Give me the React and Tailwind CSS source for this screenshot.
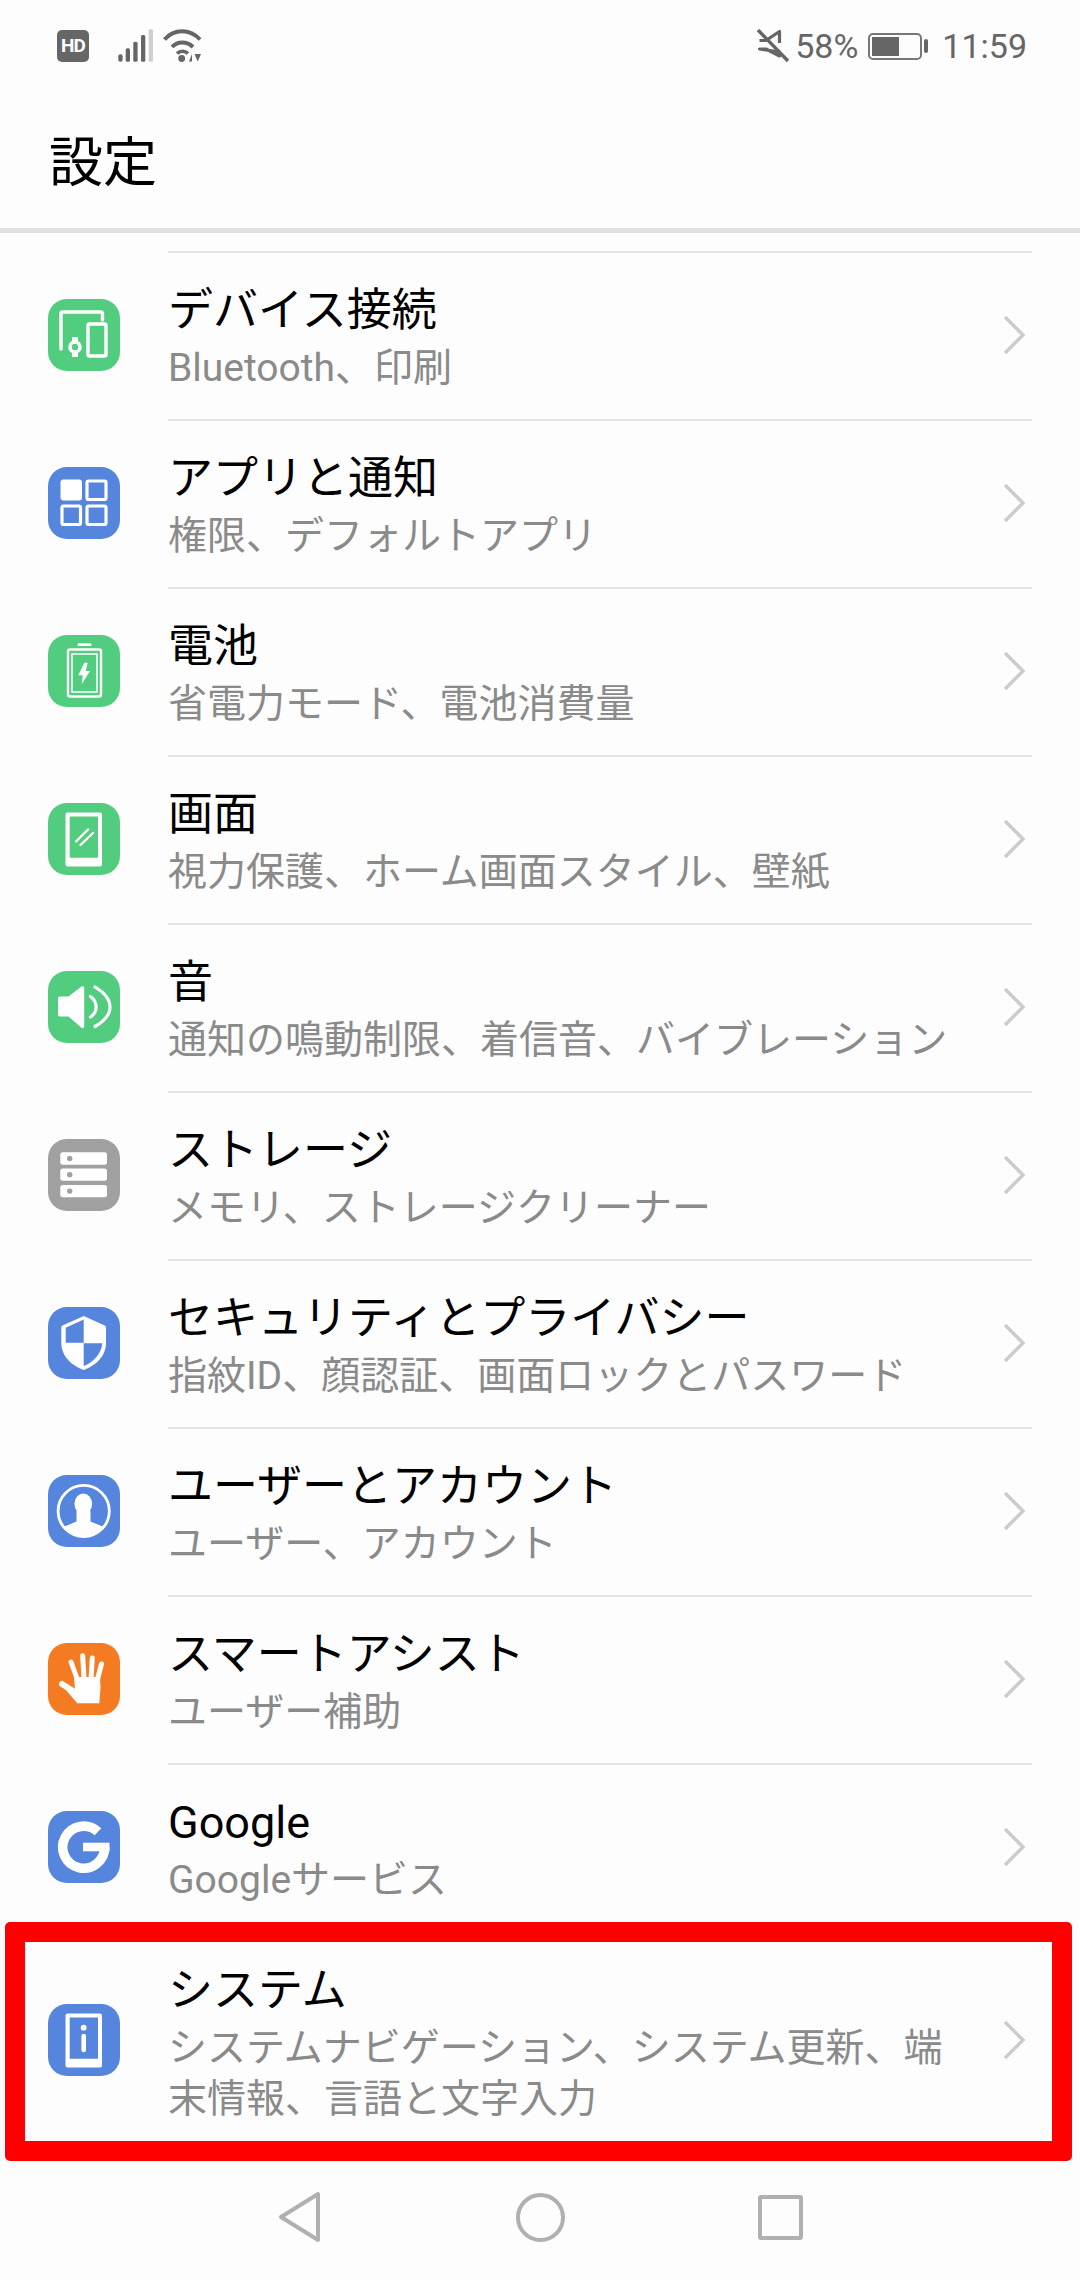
const GREEN = "#52cc7f";
const BLUE = "#5585dc";
const GRAY = "#a0a0a0";
const ORANGE = "#f47b22";

function IconBox({ color, children }) {
  return (
    <svg width="72" height="72" viewBox="0 0 72 72" className="block">
      <rect x="0" y="0" width="72" height="72" rx="19" fill={color} />
      {children}
    </svg>
  );
}

const DeviceIcon = () => (
  <IconBox color={GREEN}>
    <path d="M13 50V14.5a1.5 1.5 0 0 1 1.5-1.5H53a1.5 1.5 0 0 1 1.5 1.5V21" fill="none" stroke="#fff" strokeWidth="3.4" strokeLinecap="round" />
    <rect x="40" y="25" width="18" height="32" rx="1.5" fill="none" stroke="#fff" strokeWidth="3.4" />
    <circle cx="27" cy="48" r="5" fill="none" stroke="#fff" strokeWidth="3.6" />
    <rect x="24" y="38" width="6" height="4" fill="#fff" />
    <rect x="24" y="54" width="6" height="4" fill="#fff" />
  </IconBox>
);

const AppsIcon = () => (
  <IconBox color={BLUE}>
    <rect x="12.5" y="12.5" width="21.5" height="21" rx="3" fill="#fff" />
    <rect x="39" y="14" width="19" height="18.5" rx="1.5" fill="none" stroke="#fff" strokeWidth="3.2" />
    <rect x="14" y="39" width="18.5" height="18.5" rx="1.5" fill="none" stroke="#fff" strokeWidth="3.2" />
    <rect x="39" y="39" width="19" height="18.5" rx="1.5" fill="none" stroke="#fff" strokeWidth="3.2" />
  </IconBox>
);

const BatteryIcon = () => (
  <IconBox color={GREEN}>
    <rect x="29.5" y="8.3" width="14" height="2.8" rx="1.2" fill="#fff" />
    <rect x="20" y="14.5" width="33" height="47" rx="2" fill="none" stroke="#fff" strokeWidth="2.4" />
    <rect x="24" y="19" width="25" height="38" fill="none" stroke="#fff" strokeWidth="1.5" />
    <path d="M36.3 27.7L30.3 40.3H34.7L33.7 49.3L42 36H37.7L39.7 27.7Z" fill="#fff" />
  </IconBox>
);

const ScreenIcon = () => (
  <IconBox color={GREEN}>
    <path fillRule="evenodd" clipRule="evenodd" d="M19.5 9.5H52a2 2 0 0 1 2 2V61.5a2 2 0 0 1-2 2H19.5a2 2 0 0 1-2-2V11.5a2 2 0 0 1 2-2ZM21.7 13.5V54.7H50V13.5Z" fill="#fff" />
    <path d="M28 38.5L40 26.5M32.5 42L45 30" stroke="#fff" strokeWidth="2.4" strokeLinecap="round" />
  </IconBox>
);

const SoundIcon = () => (
  <IconBox color={GREEN}>
    <path d="M10 27.5a2 2 0 0 1 2-2H20.5L33.5 15.5a1.6 1.6 0 0 1 2.7 1.2V55.5a1.6 1.6 0 0 1-2.7 1.2L20.5 45.5H12a2 2 0 0 1-2-2Z" fill="#fff" />
    <path d="M42.5 25.5C50 31 50 41 42.5 46" fill="none" stroke="#fff" strokeWidth="3.2" strokeLinecap="round" />
    <path d="M47 16C67 28 67 44 47 55.5" fill="none" stroke="#fff" strokeWidth="3.2" strokeLinecap="round" />
  </IconBox>
);

const StorageIcon = () => (
  <IconBox color={GRAY}>
    <rect x="12.3" y="13.3" width="46.7" height="12.4" rx="2.5" fill="#fff" />
    <rect x="12.3" y="29.6" width="46.7" height="12.2" rx="2.5" fill="#fff" />
    <rect x="12.3" y="46" width="46.7" height="12.2" rx="2.5" fill="#fff" />
    <circle cx="21.7" cy="19.5" r="2.7" fill={GRAY} />
    <circle cx="21.7" cy="35.7" r="2.7" fill={GRAY} />
    <circle cx="21.7" cy="52.1" r="2.7" fill={GRAY} />
  </IconBox>
);

const ShieldIcon = () => (
  <IconBox color={BLUE}>
    <path d="M35.7 9L14.5 18.5a2 2 0 0 0-1.2 1.8V36C13.3 50 25 59 35.7 63C46.5 59 58 50 58 36V20.3a2 2 0 0 0-1.2-1.8Z" fill="#fff" />
    <path d="M17.7 20.7L35.7 12.5V35.7H17.7Z" fill={BLUE} />
    <path d="M35.7 36.3H54.3C53.5 47 45 55.5 35.7 59Z" fill={BLUE} />
  </IconBox>
);

const UserIcon = () => (
  <IconBox color={BLUE}>
    <circle cx="35.7" cy="36" r="25.6" fill="none" stroke="#fff" strokeWidth="2.8" />
    <ellipse cx="35.3" cy="29" rx="8.8" ry="10.5" fill="#fff" />
    <path d="M15.5 52L28.5 46.5V36H42.5V46.5L56 52C50 58.5 43 61 35.7 61C28 61 21 58 15.5 52Z" fill="#fff" />
  </IconBox>
);

const HandIcon = () => (
  <IconBox color={ORANGE}>
    <path d="M26 34H52L52.5 45L51.3 60.3H29.3L14 42.5L27 47Z" fill="#fff" />
    <path d="M14 41L28 50" stroke="#fff" strokeWidth="6" strokeLinecap="round" />
    <path d="M23 19L30 38M34.7 12.8L36 36M44.3 15L43 36M53.5 21L49 38" stroke="#fff" strokeWidth="5" strokeLinecap="round" />
  </IconBox>
);

const GoogleIcon = () => (
  <IconBox color={BLUE}>
    <path d="M50 20.8A21 21 0 1 0 56.7 36" fill="none" stroke="#fff" strokeWidth="9.6" />
    <rect x="35" y="31.7" width="26.5" height="8.6" fill="#fff" />
  </IconBox>
);

const InfoIcon = () => (
  <IconBox color={BLUE}>
    <path fillRule="evenodd" clipRule="evenodd" d="M19.5 9.5H52a2 2 0 0 1 2 2V61.5a2 2 0 0 1-2 2H19.5a2 2 0 0 1-2-2V11.5a2 2 0 0 1 2-2ZM21.7 13.5V54.7H50V13.5Z" fill="#fff" />
    <circle cx="35.7" cy="23.7" r="2.9" fill="#fff" />
    <path d="M35.7 32V46" stroke="#fff" strokeWidth="4.6" strokeLinecap="round" />
  </IconBox>
);

const rows = [
  { title: "デバイス接続", sub: "Bluetooth、印刷", icon: <DeviceIcon /> },
  { title: "アプリと通知", sub: "権限、デフォルトアプリ", icon: <AppsIcon /> },
  { title: "電池", sub: "省電力モード、電池消費量", icon: <BatteryIcon /> },
  { title: "画面", sub: "視力保護、ホーム画面スタイル、壁紙", icon: <ScreenIcon /> },
  { title: "音", sub: "通知の鳴動制限、着信音、バイブレーション", icon: <SoundIcon /> },
  { title: "ストレージ", sub: "メモリ、ストレージクリーナー", icon: <StorageIcon /> },
  { title: "セキュリティとプライバシー", sub: "指紋ID、顔認証、画面ロックとパスワード", icon: <ShieldIcon /> },
  { title: "ユーザーとアカウント", sub: "ユーザー、アカウント", icon: <UserIcon /> },
  { title: "スマートアシスト", sub: "ユーザー補助", icon: <HandIcon /> },
  { title: "Google", sub: "Googleサービス", icon: <GoogleIcon /> },
  { title: "システム", sub: "システムナビゲーション、システム更新、端末情報、言語と文字入力", icon: <InfoIcon /> },
];

function SettingRow({ title, sub, icon }) {
  return (
    <div className="flex">
      <div className="w-[168px] pl-12 pb-[5px] shrink-0 flex items-center">{icon}</div>
      <div className="flex-1 mr-12 flex items-center justify-between border-b-2 border-[#e4e4e4]">
        <div className="w-[790px] pt-[28px] pb-[25px]">
          <div className="text-[45px] leading-[60px] text-black">{title}</div>
          <div className="mt-[2px] text-[39px] leading-[51px] text-[#8a8a8a]">{sub}</div>
        </div>
        <svg width="24" height="40" viewBox="0 0 24 40" className="mr-[6px] mb-[3px]">
          <path d="M3 2L21 20L3 38" fill="none" stroke="#cccccc" strokeWidth="3.4" />
        </svg>
      </div>
    </div>
  );
}

function StatusBar() {
  return (
    <div className="h-[90px] pt-[2px] pl-[57px] pr-[53px] flex items-center justify-between text-[#666666]">
      <div className="flex items-center">
        <div className="w-[32px] h-[32px] rounded-[5px] bg-[#666666] text-white text-[19px] font-bold leading-[32px] text-center tracking-[-1px]">HD</div>
        <svg width="36" height="34" viewBox="0 0 36 34" className="ml-[29px]">
          <rect x="0.3" y="25.3" width="4.3" height="7.4" rx="2" fill="#666" />
          <rect x="7.7" y="19.3" width="4.3" height="13.4" rx="1.5" fill="#666" />
          <rect x="15.3" y="12.7" width="4.3" height="20" rx="1.5" fill="#666" />
          <rect x="23" y="6" width="4.3" height="26.7" rx="1.5" fill="#666" />
          <rect x="30.7" y="0.3" width="4.3" height="32.4" rx="1.5" fill="#cfcfcf" />
        </svg>
        <svg width="40" height="34" viewBox="0 0 40 34" className="ml-[9px]">
          <path d="M1.5 10.5C11 -0.5 27 -0.5 37 10.5" fill="none" stroke="#666" strokeWidth="4" />
          <path d="M9 18C14.5 12 24 12 30 18" fill="none" stroke="#666" strokeWidth="4" />
          <path d="M14 24.5C17 21.5 22 21.5 25 24.5" fill="none" stroke="#666" strokeWidth="3.5" />
          <circle cx="18.7" cy="29.5" r="3.4" fill="#666" />
          <path d="M26 32.5L29 25V32.5Z M31.5 25H38L34.7 32.5Z" fill="#666" />
        </svg>
      </div>
      <div className="flex items-center text-[34px] leading-[40px]">
        <svg width="32" height="34" viewBox="0 0 32 34">
          <path d="M2.5 11.5H9L22.5 2.5V14M22.5 23V27L9 20H2.5Z" fill="none" stroke="#666" strokeWidth="3.2" strokeLinejoin="round" />
          <path d="M1 1L31 32" stroke="#666" strokeWidth="3.4" />
        </svg>
        <span className="ml-[6px]">58%</span>
        <div className="ml-[10px] flex items-center">
          <div className="w-[54px] h-[27px] rounded-[5px] border-2 border-[#777777] p-[2px]">
            <div className="w-[27px] h-full bg-[#666666]" />
          </div>
          <div className="ml-[2px] w-[4px] h-[14px] rounded-[2px] bg-[#666666]" />
        </div>
        <span className="ml-[14px]">11:59</span>
      </div>
    </div>
  );
}

function NavBar() {
  return (
    <div className="h-[130px] flex items-center justify-center">
      <div className="w-[240px] flex justify-center">
        <svg width="44" height="52" viewBox="0 0 44 52">
          <path d="M40 3V49L3 26Z" fill="none" stroke="#b0b0b0" strokeWidth="4" strokeLinejoin="round" />
        </svg>
      </div>
      <div className="w-[240px] flex justify-center">
        <div className="w-[49px] h-[49px] rounded-full border-4 border-[#b0b0b0]" />
      </div>
      <div className="w-[240px] flex justify-center">
        <div className="w-[45px] h-[45px] rounded-[3px] border-4 border-[#b0b0b0]" />
      </div>
    </div>
  );
}

export default function App() {
  return (
    <div className="relative w-[1080px] h-[2280px] overflow-hidden bg-[#fdfdfd] font-[Roboto,'Noto_Sans_CJK_JP',sans-serif]">
      <StatusBar />
      <div className="h-[138px] pl-[49px] pt-[42px] text-[54px] leading-[64px] text-black">設定</div>
      <div className="h-[5px] bg-[#e0e0e0]" />
      <div className="h-[18px]" />
      <div className="ml-[168px] mr-12 h-[2px] bg-[#e4e4e4]" />
      {rows.map((row) => (
        <SettingRow key={row.title} {...row} />
      ))}
      <NavBar />
      <div className="absolute left-[5px] top-[1922px] w-[1067px] h-[239px] border-[20px] border-[#ff0000] rounded-[5px]" />
    </div>
  );
}
